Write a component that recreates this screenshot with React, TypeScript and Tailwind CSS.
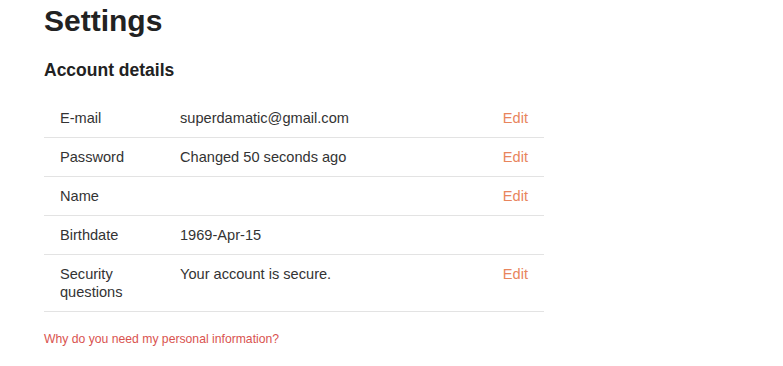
const rows = [
  { label: "E-mail", value: "superdamatic@gmail.com", edit: true },
  { label: "Password", value: "Changed 50 seconds ago", edit: true },
  { label: "Name", value: "", edit: true },
  { label: "Birthdate", value: "1969-Apr-15", edit: false },
  { label: "Security questions", value: "Your account is secure.", edit: true },
];

export default function App() {
  return (
    <div className="min-h-screen bg-white pl-[44px] pt-[4px] font-['Liberation_Sans',Arial,sans-serif] text-[#333]">
      <h1 className="text-[30px] font-bold leading-[33px] text-[#222]">Settings</h1>

      <h2 className="mt-[23px] text-[17.5px] font-bold leading-[20px] text-[#222]">Account details</h2>

      <div className="mt-[19px] w-[500px] text-[14.6px]">
        {rows.map((row) => (
          <div
            key={row.label}
            className="flex items-start py-[10px] leading-[18px] border-b border-[#e3e3e3]"
          >
            <div className="w-[136px] shrink-0 pl-4 pr-2">{row.label}</div>
            <div className="flex-1">{row.value}</div>
            <div className="w-[60px] pr-4 text-right">
              {row.edit && <a href="#" className="text-[#e8855d]">Edit</a>}
            </div>
          </div>
        ))}
      </div>

      <a href="#" className="mt-[19px] block text-[12.2px] leading-[16px] text-[#d9534f]">
        Why do you need my personal information?
      </a>
    </div>
  );
}
